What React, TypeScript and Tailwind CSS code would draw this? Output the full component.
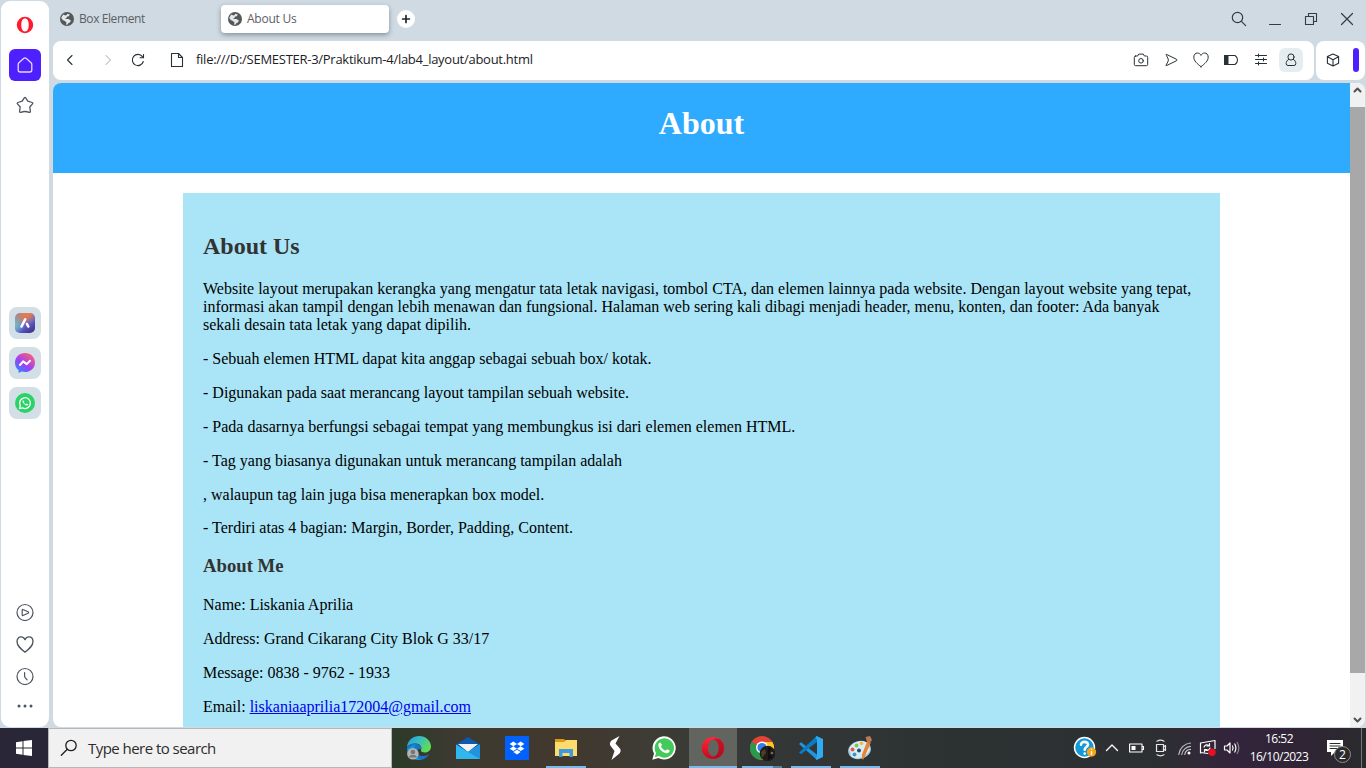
import React from "react";

type IconProps = {
  w: number;
  h: number;
  children: React.ReactNode;
  stroke?: string;
  sw?: number;
  className?: string;
};

function Icon({ w, h, children, stroke = "none", sw = 1.2, className = "" }: IconProps) {
  return (
    <svg
      width={w}
      height={h}
      viewBox={`0 0 ${w} ${h}`}
      fill="none"
      stroke={stroke}
      strokeWidth={sw}
      strokeLinecap="round"
      strokeLinejoin="round"
      className={`block shrink-0 ${className}`}
    >
      {children}
    </svg>
  );
}

const INK = "#4b555f";
const DARK = "#263238";

const heart = "M9 16C5.2 13 1.8 10.3 1.8 6.4C1.8 3.9 3.4 2.3 5.4 2.3C7 2.3 8.3 3.2 9 4.7C9.7 3.2 11 2.3 12.6 2.3C14.6 2.3 16.2 3.9 16.2 6.4C16.2 10.3 12.8 13 9 16Z";

function Globe() {
  return (
    <Icon w={14} h={14}>
      <circle cx="7" cy="7" r="7" fill="#555759" />
      <path d="M7.500 1.800L9.800 2.600L8.800 4.300L7 4.600L6.800 5.800L5 6.300L6.600 7L8.600 7.100L10.800 8.400L10.200 10.200L8.300 11.200L7.400 12.700L6 12.600L6.500 10.800L5.300 9.200L3.200 8.300L1.400 6.600C1.500 5 2.300 3.500 3.600 2.600L5.200 3.600L6.600 3Z" fill="#e2e7ea" />
    </Icon>
  );
}

function WhatsappGlyph() {
  return (
    <>
      <path d="M.3 23.700L2 17.600A11.600 11.600 0 1 1 6.400 22Z" fill="#fff" />
      <path d="M2.800 21.200L4 17A9.700 9.700 0 1 1 7 20.100Z" fill="#44c95b" />
      <path d="M8.300 6.600C7.600 6.600 6.200 7.500 6.400 9.500C6.800 13.400 11.300 17.200 14.800 17.200C16.600 17.200 17.800 16 17.700 14.600L15 13.200L13.700 14.700C11.600 14 9.800 12.200 9 10.300L10.100 9Z" fill="#fff" />
    </>
  );
}

function Sidebar() {
  return (
    <aside className="ml-px mt-px flex h-[726px] w-12 shrink-0 flex-col items-center rounded-[9px] bg-white">
      <Icon w={18} h={18} className="mt-[15px]">
        <path fillRule="evenodd" d="M9 .8A8.2 8.2 0 1 0 9 17.2A8.2 8.2 0 0 0 9 .8ZM9 2.600C11.500 2.600 12.700 5.200 12.700 9S11.500 15.400 9 15.400S5.300 12.800 5.300 9S6.500 2.600 9 2.600Z" fill="#ff1b2d" />
      </Icon>
      <div className="mt-[15px] flex h-8 w-8 items-center justify-center rounded-md bg-[#4f20ff]">
        <Icon w={18} h={18} stroke="#e4dcff" sw={1.3}>
          <path d="M2.200 8.300C2.200 7.400 2.500 7 3.200 6.400L7.600 2.500Q9 1.300 10.400 2.500L14.800 6.400C15.500 7 15.800 7.400 15.800 8.300V14Q15.800 16 13.800 16H4.200Q2.200 16 2.200 14Z" />
        </Icon>
      </div>
      <Icon w={18} h={18} stroke={INK} sw={1.3} className="mt-[15px]">
        <path d="M8.300 1.800Q9 .900 9.700 1.800L11.800 5.200L16.100 6.500Q17.200 7 16.500 7.900L13.800 11L14.400 15.400Q14.300 16.600 13.200 16.300Q9 14.700 4.800 16.300Q3.700 16.600 3.600 15.400L4.200 11L1.500 7.900Q.800 7 1.900 6.500L6.200 5.200Z" />
      </Icon>

      <div className="mt-[193px] flex flex-col gap-2">
        <div className="flex h-8 w-8 items-center justify-center rounded-lg bg-[#d3dfe6]">
          <Icon w={20} h={20}>
            <defs>
              <linearGradient id="aria" x1="0" y1="0" x2=".7" y2="1">
                <stop offset="0" stopColor="#8795a8" />
                <stop offset=".35" stopColor="#c5796d" />
                <stop offset=".65" stopColor="#5d62d6" />
                <stop offset="1" stopColor="#473690" />
              </linearGradient>
              <radialGradient id="ariaWarm" cx=".6" cy=".05" r=".55">
                <stop offset="0" stopColor="#e77d4d" />
                <stop offset="1" stopColor="#e77d4d" stopOpacity="0" />
              </radialGradient>
              <radialGradient id="ariaCyan" cx="0" cy=".6" r=".5">
                <stop offset="0" stopColor="#64c2d0" />
                <stop offset="1" stopColor="#64c2d0" stopOpacity="0" />
              </radialGradient>
            </defs>
            <rect width="20" height="20" rx="5" fill="url(#aria)" />
            <rect width="20" height="20" rx="5" fill="url(#ariaWarm)" />
            <rect width="20" height="20" rx="5" fill="url(#ariaCyan)" />
            <path d="M6.500 13.500L10.200 6.300M12 11L13.300 13.500" stroke="#fff" strokeWidth="2.600" />
          </Icon>
        </div>
        <div className="flex h-8 w-8 items-center justify-center rounded-lg bg-[#d3dfe6]">
          <Icon w={20} h={20}>
            <defs>
              <linearGradient id="msg" x1=".1" y1="1" x2=".8" y2="0">
                <stop offset="0" stopColor="#1894ff" />
                <stop offset=".45" stopColor="#9b40fa" />
                <stop offset="1" stopColor="#ff6170" />
              </linearGradient>
            </defs>
            <path d="M10 0C4.300 0 0 4.200 0 9.700C0 12.900 1.300 15.500 3.600 17.300V20L6.600 18.500C12.800 20.400 20 16.700 20 9.700C20 4.200 15.700 0 10 0Z" fill="url(#msg)" />
            <path d="M5 12L8.100 8.400L11.700 11.100L15 7.800" stroke="#fff" strokeWidth="2" />
          </Icon>
        </div>
        <div className="flex h-8 w-8 items-center justify-center rounded-lg bg-[#d3dfe6]">
          <Icon w={20} h={20}>
            <circle cx="10" cy="10" r="10" fill="#2bd366" />
            <path d="M4.500 15.700L5.300 12.800A5.400 5.400 0 1 1 7.500 14.900Z" stroke="#fff" strokeWidth="1.300" />
            <path d="M8.200 7.300C7.300 7.700 7.200 8.700 8.200 10C9.500 11.900 11.600 13 12.700 12.300C13.200 12 13.200 11.500 13 11.200L11.700 10.600L11 11.300Q9.700 10.800 8.900 9.400L9.400 8.700Z" fill="#fff" />
          </Icon>
        </div>
      </div>

      <div className="mt-[184px] flex flex-col items-center gap-[14px]">
        <Icon w={18} h={18} stroke={INK} sw={1.2} className="-ml-px">
          <circle cx="9" cy="9.500" r="8" />
          <path d="M6.200 7Q6.200 6.100 7 6.500L12 8.800Q13.200 9.500 12 10.200L7 12.500Q6.200 12.800 6.200 12Z" />
        </Icon>
        <Icon w={18} h={18} stroke={INK} sw={1.2} className="-ml-px">
          <path d={heart} transform="translate(-1 -.6) scale(1.110)" />
        </Icon>
        <Icon w={18} h={18} stroke={INK} sw={1.2} className="-ml-px">
          <circle cx="9" cy="9.500" r="8" />
          <path d="M8.600 5.500V9.200Q8.600 9.900 9 10.400L11.100 12.800" />
        </Icon>
      </div>
      <Icon w={18} h={4} className="mt-[19px]">
        <circle cx="3" cy="2" r="1.500" fill={INK} />
        <circle cx="9" cy="2" r="1.500" fill={INK} />
        <circle cx="15" cy="2" r="1.500" fill={INK} />
      </Icon>
    </aside>
  );
}

function TabStrip() {
  return (
    <div className="flex h-[41px] items-start text-[#5b6066]">
      <div className="ml-[7px] mt-[5px] flex h-7 w-[161px] items-center gap-[5px]">
        <Globe />
        <span className="whitespace-nowrap font-['Open_Sans','Noto_Sans',sans-serif] text-[12px] tracking-[-0.41px]">Box Element</span>
      </div>
      <div className="mt-[5px] flex h-7 w-[168px] items-center gap-[5px] rounded bg-white pl-[7px] shadow-[0_2px_5px_rgba(40,60,75,0.45)]">
        <Globe />
        <span className="whitespace-nowrap font-['Open_Sans','Noto_Sans',sans-serif] text-[12px] tracking-[-0.25px]">About Us</span>
      </div>
      <div className="ml-2 mt-[10px] flex h-[18px] w-[18px] items-center justify-center rounded-full bg-white">
        <Icon w={10} h={10} stroke="#20262b" sw={1.700}>
          <path d="M5 1.600V8.400M1.600 5H8.400" />
        </Icon>
      </div>
      <div className="ml-auto mr-[12px] mt-[11px] flex items-start">
        <Icon w={16} h={16} stroke="#363b40" sw={1.200}>
          <circle cx="6.500" cy="6.500" r="5.200" />
          <path d="M10.400 10.400L14.700 14.700" />
        </Icon>
        <Icon w={14} h={16} stroke="#363b40" sw={1.100} className="ml-[21px]">
          <path d="M1.500 13.500H12.500" />
        </Icon>
        <Icon w={14} h={16} stroke="#363b40" sw={1.100} className="ml-[22px]">
          <path d="M1.500 5.500H9.500V13.500H1.500ZM4.500 5.500V2.500H12.500V10.500H9.500" />
        </Icon>
        <Icon w={14} h={16} stroke="#363b40" sw={1.200} className="ml-[22px]">
          <path d="M1.500 2.500L12.500 13.500M12.500 2.500L1.500 13.500" />
        </Icon>
      </div>
    </div>
  );
}

function AddressBar() {
  return (
    <div className="flex h-[39px] gap-[2px] pr-px">
      <div className="flex w-[1261px] items-center rounded-lg bg-white pb-px">
        <Icon w={8} h={12} stroke={DARK} sw={1.100} className="ml-[13px]">
          <path d="M6 1.500L1.500 6L6 10.500" />
        </Icon>
        <Icon w={8} h={12} stroke="#c6cbcf" sw={1.100} className="ml-[30px]">
          <path d="M2 1.500L6.500 6L2 10.500" />
        </Icon>
        <Icon w={14} h={14} stroke={DARK} sw={1.100} className="ml-[19px]">
          <path d="M12.300 8.500A5.600 5.600 0 1 1 11.400 3.600M12.500 1.500V4.800H9" />
        </Icon>
        <Icon w={14} h={16} stroke={DARK} sw={1.100} className="ml-[25px]">
          <path d="M1.500 1.500H8.500L12.500 5.500V14.500H1.500ZM8.500 1.500V5.500H12.500" />
        </Icon>
        <span className="ml-[12px] whitespace-nowrap font-['Open_Sans','Noto_Sans',sans-serif] text-[13px] tracking-[-0.27px] text-[#1c2126]">
          file:///D:/SEMESTER-3/Praktikum-4/lab4_layout/about.html
        </span>
        <div className="ml-auto mr-[11px] flex items-center gap-[12px]">
          <Icon w={18} h={18} stroke={DARK} sw={1}>
            <path d="M3.600 5H5.600L6.700 3.100H11.300L12.400 5H14.400Q15.700 5 15.700 6.300V13.400Q15.700 14.700 14.400 14.700H3.600Q2.300 14.700 2.300 13.400V6.300Q2.300 5 3.600 5Z" />
            <circle cx="9" cy="9.800" r="2.300" />
          </Icon>
          <Icon w={18} h={18} stroke={DARK} sw={1}>
            <path d="M4.200 4.100Q3.400 2.900 4.700 3.500L14.600 8.300Q15.700 9 14.600 9.700L4.700 14.500Q3.400 15.100 4.200 13.900L5.900 10.800Q7 9 5.900 7.200Z" />
          </Icon>
          <Icon w={18} h={18} stroke={DARK} sw={1}>
            <path d={heart} transform="translate(0 -.3)" />
          </Icon>
          <Icon w={18} h={18} stroke={DARK} sw={1.100}>
            <path d="M2.700 4.500H13Q15.500 6 15.500 9T13 13.500H2.700Z" />
            <path d="M2 4H6.500V14H2Z" fill={DARK} stroke="none" />
          </Icon>
          <Icon w={18} h={18} stroke={DARK} sw={1}>
            <path d="M3.500 4.500H14.500M3.500 8.500H14.500M3.500 12.500H14.500M6.500 3V6M11.500 7V10M6.500 11V14" />
          </Icon>
          <div className="-ml-[3px] flex h-6 w-6 items-center justify-center rounded-md bg-[#e6edf1]">
            <Icon w={14} h={16} stroke={DARK} sw={1}>
              <circle cx="7" cy="5" r="3.100" />
              <path d="M4.700 7.300C2.800 8.300 2.200 10 2.200 11.600Q2.200 13.500 4 13.500H10Q11.800 13.500 11.800 11.600C11.800 10 11.200 8.300 9.300 7.300" />
            </Icon>
          </div>
        </div>
      </div>
      <div className="flex flex-1 items-center rounded-lg bg-white pb-px">
        <Icon w={14} h={14} stroke={DARK} sw={1.100} className="ml-[10px]">
          <path d="M7 1L12.600 3.600V10.200L7 13L1.400 10.200V3.600ZM1.400 3.800L7 6.700L12.600 3.800M7 6.700V13" />
        </Icon>
        <div className="ml-[13px] h-6 w-[6px] rounded-full bg-[#4f20ff]" />
      </div>
    </div>
  );
}

const points: string[] = [
  "- Sebuah elemen HTML dapat kita anggap sebagai sebuah box/ kotak.",
  "- Digunakan pada saat merancang layout tampilan sebuah website.",
  "- Pada dasarnya berfungsi sebagai tempat yang membungkus isi dari elemen elemen HTML.",
  "- Tag yang biasanya digunakan untuk merancang tampilan adalah",
  ", walaupun tag lain juga bisa menerapkan box model.",
  "- Terdiri atas 4 bagian: Margin, Border, Padding, Content.",
];

function Page() {
  return (
    <div className="mr-px mt-[3px] flex h-[644px] overflow-hidden rounded-lg bg-white">
      <main className="w-[1297px] font-['Liberation_Serif','Times_New_Roman',serif] text-[16px] leading-[18px] text-black">
        <header className="h-[90px] bg-[#2eaafe] pt-[22px] text-center text-[32px] font-bold leading-[36px] text-white">
          <h1>About</h1>
        </header>
        <section className="ml-[130px] mt-5 h-[560px] w-[1037px] bg-[#aae5f7] px-5 pt-[39px]">
          <h2 className="text-[24px] font-bold leading-[28px] text-[#333333]">About Us</h2>
          <p className="mt-[20.400px] whitespace-nowrap">
            Website layout merupakan kerangka yang mengatur tata letak navigasi, tombol CTA, dan elemen lainnya pada website. Dengan layout website yang tepat,
            <br />
            informasi akan tampil dengan lebih menawan dan fungsional. Halaman web sering kali dibagi menjadi header, menu, konten, dan footer: Ada banyak
            <br />
            sekali desain tata letak yang dapat dipilih.
          </p>
          {points.map((t) => (
            <p key={t} className="mt-[15.840px] whitespace-nowrap">{t}</p>
          ))}
          <h3 className="mt-[17.400px] text-[18.700px] font-bold leading-[21px] text-[#333333]">About Me</h3>
          <p className="mt-[20.200px]">Name: Liskania Aprilia</p>
          <p className="mt-[16px]">Address: Grand Cikarang City Blok G 33/17</p>
          <p className="mt-[16px]">Message: 0838 - 9762 - 1933</p>
          <p className="mt-[16px]">
            Email: <a className="text-[#0000ee] underline">liskaniaaprilia172004@gmail.com</a>
          </p>
        </section>
      </main>
      <div className="flex flex-1 flex-col items-center bg-[#f1f1f1]">
        <Icon w={11} h={8} stroke="#505050" sw={2} className="mb-[13px] mt-[3px]">
          <path d="M2.500 5.500L5.500 2.500L8.500 5.500" />
        </Icon>
        <div className="h-[566px] w-full bg-[#a8a8a8]" />
        <Icon w={11} h={8} stroke="#505050" sw={2} className="mb-[3px] mt-auto">
          <path d="M2.500 2.500L5.500 5.500L8.500 2.500" />
        </Icon>
      </div>
    </div>
  );
}

function AppCell({ children, bar = "none" }: { children: React.ReactNode; bar?: "none" | "open" | "active" | "stack" }) {
  return (
    <div className={`flex h-10 w-12 flex-col items-center ${bar === "active" ? "bg-[#626460]" : ""}`}>
      <div className="flex h-[38px] w-full items-center justify-center pt-[2px]">{children}</div>
      {bar === "open" && <div className="h-[2px] w-10 bg-[#76b9ed]" />}
      {bar === "active" && <div className="h-[2px] w-12 bg-[#76b9ed]" />}
      {bar === "stack" && (
        <div className="flex h-[2px] w-10 bg-[#76b9ed]">
          <div className="ml-auto w-[9px] bg-[#54819f]" />
        </div>
      )}
    </div>
  );
}

function Taskbar() {
  return (
    <footer className="flex h-10 w-full bg-[linear-gradient(90deg,#292638_0px,#292638_48px,#2b3a29_392px,#3c3a30_450px,#42382e_560px,#3d3c35_650px,#343837_760px,#2c3132_950px,#2c3032_1150px,#33243b_1230px,#302437_1290px,#2a2a2c_1366px)]">
      <div className="flex w-12 items-center justify-center">
        <Icon w={16} h={16}>
          <path d="M0 2.300L6.500 1.300V7.500H0ZM7.500 1.100L16 0V7.500H7.500ZM0 8.500H6.500V14.700L0 13.700ZM7.500 8.500H16V16L7.500 14.900Z" fill="#fff" />
        </Icon>
      </div>
      <div className="flex w-[344px] items-center border border-[#b7b7b7] bg-[#f1f1f1] pl-[11px]">
        <Icon w={18} h={18} stroke="#202020" sw={1.300}>
          <circle cx="11" cy="6.500" r="5.200" />
          <path d="M7.300 10.200L1.300 16.200" />
        </Icon>
        <span className="ml-[10px] whitespace-nowrap font-['Open_Sans','Noto_Sans',sans-serif] text-[15px] tracking-[-0.54px] text-[#2c2c2c]">Type here to search</span>
      </div>
      <nav className="ml-[3px] flex gap-px">
        <AppCell>
          <Icon w={26} h={26}>
            <defs>
              <linearGradient id="edgeTop" x1="0" y1="0" x2="1" y2=".6">
                <stop offset="0" stopColor="#2794e4" />
                <stop offset=".45" stopColor="#35bcc6" />
                <stop offset="1" stopColor="#62dc50" />
              </linearGradient>
            </defs>
            <path d="M1 12C1.500 5.500 6.800 1 13 1C20 1 25 6 25 11.500C25 15 22.500 17.500 19 17.500C16 17.500 14.500 16.300 15 15C16.500 12 14 8.500 9.800 8.500C6 8.500 2.500 10 1 12Z" fill="url(#edgeTop)" />
            <path d="M1 12.500C2 9.500 6 8.200 9.500 8.600C13.500 9 16 11.500 15 14.300C12 13 9.800 16 12 19C14 21.500 19 22 23 19C21 23 17 25 13 25C6 25 1 19.500 1 12.500Z" fill="#1675c4" />
            <path d="M9.500 9C7 13 7 21 15 24.800C7 26 1.500 20 1 14Z" fill="#1596d8" />
            <circle cx="6.900" cy="18.800" r="5.800" fill="#b3b4b5" />
            <circle cx="6.900" cy="17" r="2.300" fill="#777" />
            <path d="M3 22.500C3 18.800 10.800 18.800 10.800 22.500Z" fill="#777" />
          </Icon>
        </AppCell>
        <AppCell>
          <Icon w={24} h={24}>
            <path d="M0 8.500L12 1L24 8.500V14H0Z" fill="#0f58ad" />
            <path d="M2 8H22L12 16Z" fill="#f2f2f2" />
            <path d="M0 8.500L12 16L24 8.500V23H0Z" fill="#30b7ef" />
            <path d="M24 8.500V23L12 16Z" fill="#2093dc" />
          </Icon>
        </AppCell>
        <AppCell>
          <Icon w={24} h={24}>
            <rect width="24" height="24" fill="#0061fe" />
            <path d="M8.300 5.500L12 7.900L15.700 5.500L19.400 7.900L15.700 10.300L19.400 12.700L15.700 15L12 12.700L8.300 15L4.600 12.700L8.300 10.300L4.600 7.900ZM8.300 10.300L12 12.700L15.700 10.300L12 7.900ZM8.300 16L12 13.700L15.700 16L12 18.400Z" fill="#fff" fillRule="evenodd" />
          </Icon>
        </AppCell>
        <AppCell bar="open">
          <Icon w={24} h={24}>
            <path d="M1 3H10L12 5V8H1Z" fill="#d99a17" />
            <path d="M1 6H10L12 4H23V20H1Z" fill="#ffda6c" />
            <path d="M5 13H19V21H15.500V17H8.500V21H5Z" fill="#3c9bde" />
          </Icon>
        </AppCell>
        <AppCell>
          <Icon w={24} h={26}>
            <path d="M16.500 1L8.500 5.500Q5.500 8.500 8 11.500L11.500 16L8.500 25L16.500 18.500Q18.800 15.500 16.500 13L12.500 8.500Z" fill="#fff" />
          </Icon>
        </AppCell>
        <AppCell>
          <Icon w={24} h={24}>
            <WhatsappGlyph />
          </Icon>
        </AppCell>
        <AppCell bar="active">
          <Icon w={24} h={24}>
            <defs>
              <linearGradient id="operaRing" x1="0" y1="0" x2="0" y2="1">
                <stop offset="0" stopColor="#ff2837" />
                <stop offset="1" stopColor="#c6081c" />
              </linearGradient>
            </defs>
            <path fillRule="evenodd" d="M12 1A11.300 11 0 1 0 12 23A11.300 11 0 0 0 12 1ZM12.500 3.500C15.800 3.500 17.700 7.300 17.700 12S15.800 20.500 12.500 20.500S7 16.700 7 12S9.200 3.500 12.500 3.500Z" fill="url(#operaRing)" />
            <path d="M12.500 3.500C14.500 1.800 18 2.500 20 4.500A11 11 0 0 1 20 19.500C17.500 21.800 14.500 22 12.500 20.500C15.800 20.500 17.700 16.700 17.700 12S15.800 3.500 12.500 3.500Z" fill="#a70d21" opacity=".65" />
          </Icon>
        </AppCell>
        <AppCell bar="stack">
          <Icon w={26} h={26}>
            <circle cx="13" cy="13" r="12" fill="#e54335" />
            <path d="M13 13L2.600 7A12 12 0 0 0 12 25L17.500 15.500Z" fill="#279b4b" />
            <path d="M13 7H23.400A12 12 0 0 1 13 25L18 15Z" fill="#fcc822" />
            <circle cx="13" cy="12.500" r="6" fill="#fff" />
            <circle cx="13" cy="12.500" r="4.600" fill="#347de6" />
            <circle cx="18.500" cy="18.500" r="7.800" fill="#211c18" />
            <path d="M12 17L16 14L17 18L13 23Z" fill="#4b3f30" />
            <path d="M19 12L22 13L20 19L24 22L19 25Z" fill="#0d0f10" />
            <circle cx="23" cy="18" r="1.300" fill="#776957" />
          </Icon>
        </AppCell>
        <AppCell bar="open">
          <Icon w={24} h={24}>
            <path d="M0 8L2 6.300L18.500 19V23.800L17 23Z" fill="#2196de" />
            <path d="M0 16.500L2 18.200L18.500 5.500V0L16.500 1Z" fill="#087bc5" />
            <path d="M17.500 0L24 3V21L17.500 24L16.500 22Q18 22 18 20.500V3.500Q18 2 16.500 2Z" fill="#2eabf3" />
          </Icon>
        </AppCell>
        <AppCell bar="open">
          <Icon w={26} h={26}>
            <ellipse cx="12.500" cy="15" rx="11.500" ry="9" fill="#9dcce1" transform="rotate(-12 12.500 15)" />
            <path d="M2 15C4 7 14 4 21 8L23 15C20 22 10 25 5 22C3 20 5 18 2 15Z" fill="#d9edf5" />
            <circle cx="5.500" cy="14.500" r="2" fill="#e65845" />
            <circle cx="9.500" cy="10.500" r="1.900" fill="#7ac943" />
            <circle cx="14.500" cy="8.500" r="1.800" fill="#f0ba35" />
            <circle cx="7.500" cy="19.500" r="2" fill="#4592ca" />
            <circle cx="12" cy="15.500" r="2" fill="#244e68" />
            <path d="M20.500 7L23 8L16 24L15.500 20Z" fill="#e88431" stroke="#e88431" />
            <path d="M18.500 2L23 1L25 5L22.500 8.500L20 7Z" fill="#ba7b54" />
          </Icon>
        </AppCell>
      </nav>

      <div className="ml-auto flex items-center text-white">
        <Icon w={24} h={24}>
          <circle cx="11.500" cy="11.500" r="10.700" fill="#fff" />
          <circle cx="11.500" cy="11.500" r="9.200" fill="#1599d6" />
          <path d="M8 8.700C8 4.800 15.300 5 15 8.700C14.700 11.200 11.700 11 11.700 13.700M11.700 17.500V17.600" stroke="#fff" strokeWidth="2.600" />
          <circle cx="18.500" cy="16" r="4.700" fill="#f2a51f" />
          <path d="M18.500 15.700V18.500M18.500 13.200V13.300" stroke="#fff" strokeWidth="1.400" />
        </Icon>
        <Icon w={14} h={10} stroke="#fff" sw={1.300} className="ml-[8px]">
          <path d="M1.500 7.500L7 2L12.500 7.500" />
        </Icon>
        <Icon w={16} h={12} stroke="#fff" sw={1.100} className="ml-[10px]">
          <path d="M.600 2H13V10H.600ZM13.500 4.500H14.500V7.500H13.500" />
          <path d="M2.500 4H6.500V8H2.500Z" fill="#fff" stroke="none" />
        </Icon>
        <Icon w={14} h={18} stroke="#e6e6e6" sw={1.200} className="ml-[9px]">
          <path d="M2.500 5.500H9.500V12.500H2.500ZM9.500 8L11.500 6.500V11.500L9.500 10M3 2.200Q6.500 .200 10 2.200M3 15.800Q6.500 17.800 10 15.800" />
          <circle cx="6" cy="9" r="1" fill="#111" stroke="none" />
        </Icon>
        <Icon w={16} h={16} stroke="#bdbdbd" sw={1.200} className="ml-[9px]">
          <path d="M1.800 14.500A13 13 0 0 1 13.500 3M4.800 14.500A9.500 9.500 0 0 1 13.500 6.300M7.800 14.500A6 6 0 0 1 13.500 9.400" />
          <circle cx="12" cy="13" r="1.500" fill="#fff" stroke="none" />
        </Icon>
        <Icon w={18} h={18} stroke="#fff" sw={1.200} className="ml-[6px]">
          <path d="M9 14.500L1.500 13.500M1.500 4L16 1.500V9.500M1.500 4V14" />
          <path d="M5 8Q7 4.500 10 6.500M10.500 4.500V7H8M11 9Q9.500 12.500 6 11M5.500 13V10.500H8" />
          <circle cx="13" cy="13.200" r="3.700" fill="#e81123" stroke="none" />
        </Icon>
        <Icon w={18} h={14} stroke="#fff" sw={1.200} className="ml-[6px]">
          <path d="M1.500 5H4L7 2V12L4 9H1.500ZM9.500 5Q10.800 7 9.500 9M11.800 3Q14 7 11.800 11" />
          <path d="M14.200 1.500Q17.500 7 14.200 12.500" stroke="#888" />
        </Icon>
        <div className="ml-[5px] flex w-[66px] flex-col items-center whitespace-nowrap font-['Open_Sans','Noto_Sans',sans-serif] text-[12px] leading-[18px] tracking-[-0.5px]">
          <span>16:52</span>
          <span>16/10/2023</span>
        </div>
        <div className="relative ml-[12px] h-10 w-[28px]">
          <Icon w={18} h={18} className="ml-[3px] mt-[11px]">
            <path d="M0 1H16V13H8L4 17V13H0Z" fill="#fff" />
            <path d="M3 4.500H13M3 7H13M3 9.500H10" stroke="#2a2a2c" strokeWidth="1" />
          </Icon>
          <span className="absolute left-[10px] top-[18px] flex h-[17px] w-[17px] items-center justify-center rounded-full border border-[#8c8c8c] bg-[#2b2b2e] font-['Open_Sans','Noto_Sans',sans-serif] text-[12px] leading-none">2</span>
        </div>
        <div className="ml-[9px] mr-1 h-10 w-px bg-[#77777a]" />
      </div>
    </footer>
  );
}

export default function App() {
  return (
    <div className="flex h-[768px] w-[1366px] flex-col overflow-hidden bg-[#d0dae2]">
      <div className="flex h-[728px]">
        <Sidebar />
        <div className="ml-1 flex w-[1313px] flex-col">
          <TabStrip />
          <AddressBar />
          <Page />
        </div>
      </div>
      <Taskbar />
    </div>
  );
}
